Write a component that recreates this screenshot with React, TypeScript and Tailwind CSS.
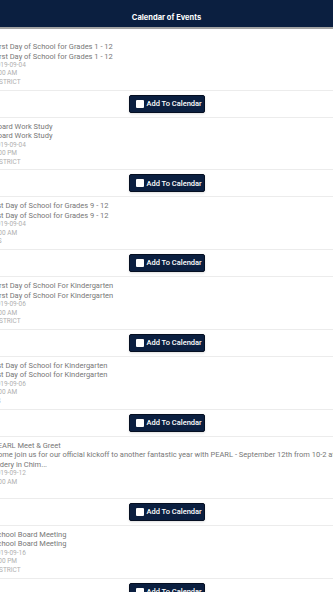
import React from 'react';

type CalEvent = {
  title: string;
  detail: string;
  date: string;
  time: string;
  place: string;
};

const EVENTS: CalEvent[] = [
  { title: 'First Day of School for Grades 1 - 12', detail: 'First Day of School for Grades 1 - 12', date: '2019-09-04', time: '8:00 AM', place: 'DISTRICT' },
  { title: 'Board Work Study', detail: 'Board Work Study', date: '2019-09-04', time: '5:00 PM', place: 'DISTRICT' },
  { title: '1st Day of School for Grades 9 - 12', detail: '1st Day of School for Grades 9 - 12', date: '2019-09-04', time: '8:00 AM', place: 'HS' },
  { title: 'First Day of School For Kindergarten', detail: 'First Day of School For Kindergarten', date: '2019-09-06', time: '8:00 AM', place: 'DISTRICT' },
  { title: '1st Day of School for Kindergarten', detail: '1st Day of School for Kindergarten', date: '2019-09-06', time: '8:00 AM', place: 'ES' },
  { title: 'PEARL Meet & Greet', detail: 'Come join us for our official kickoff to another fantastic year with PEARL - September 12th from 10-2 at\nCidery in Chim...', date: '2019-09-12', time: '8:00 AM', place: '' },
  { title: 'School Board Meeting', detail: 'School Board Meeting', date: '2019-09-16', time: '5:00 PM', place: 'DISTRICT' },
  { title: 'Board Work Study', detail: 'Board Work Study', date: '2019-09-18', time: '5:00 PM', place: 'DISTRICT' },
];

const AddButton = () => (
  <div className="flex justify-center border-b border-[#ececec] pt-[4px] pb-[4px]">
    <button className="flex items-center h-[18px] w-[76px] pl-[6px] gap-[3px] bg-[#0b1f40] border border-[#050f22] rounded-[2px] shadow-sm">
      <span className="w-[8px] h-[8px] bg-white rounded-[1px]" />
      <span className="text-white text-[7.5px] font-medium leading-none whitespace-nowrap">Add To Calendar</span>
    </button>
  </div>
);

const EventItem = ({ ev }: { ev: CalEvent }) => (
  <div>
    <div className="border-b border-[#ececec] pt-[4px] pb-[3.5px]">
      <p className="text-[7.5px] leading-[9.5px] text-[#777]">{ev.title}</p>
      <p className="text-[7.5px] leading-[9.5px] text-[#777] whitespace-pre-line">{ev.detail}</p>
      <p className="text-[6.5px] leading-[8.4px] text-[#b0b0b0]">{ev.date}</p>
      <p className="text-[6.5px] leading-[8.4px] text-[#b0b0b0]">{ev.time}</p>
      <p className="text-[6.5px] leading-[8.4px] text-[#b0b0b0]">{ev.place || '\u00a0'}</p>
    </div>
    <AddButton />
  </div>
);

export default function App() {
  return (
    <div className="w-[333px] h-[592px] overflow-hidden bg-white font-['Roboto',sans-serif]">
      {/* Header */}
      <div className="bg-[#0b1f40] pt-[13px] pb-[5px] border-b-2 border-[#a3a3a3]">
        <h1 className="text-center text-white text-[7.5px] font-bold leading-[9px] font-['Inter',sans-serif]">Calendar of Events</h1>
      </div>

      {/* List (wider than the viewport, clipped both sides) */}
      <div className="w-[347px] -ml-[7px] pt-[9px]">
        {EVENTS.map((ev, i) => (
          <EventItem key={i} ev={ev} />
        ))}
      </div>
    </div>
  );
}
